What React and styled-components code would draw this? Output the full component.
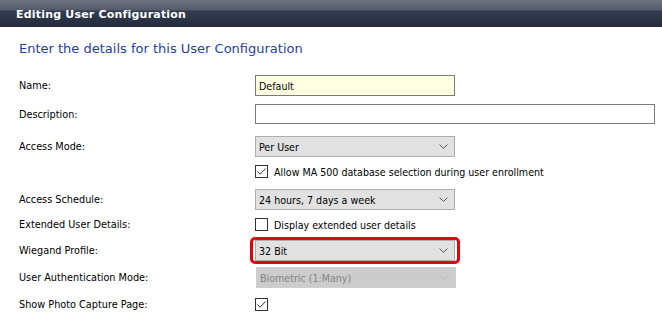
import styled, { createGlobalStyle } from 'styled-components'

const GlobalStyle = createGlobalStyle`
  html, body {
    margin: 0;
    padding: 0;
    background: #fff;
  }
`

const Chevron = ({ disabled }) => (
  <svg width="9" height="5" viewBox="0 0 9 5">
    <path d="M0.5 0.5 L4.5 4.5 L8.5 0.5" fill="none" stroke={disabled ? '#b3b3b3' : '#5a5a5a'} strokeWidth="1" />
  </svg>
)

const Tick = () => (
  <svg width="11" height="11" viewBox="0 0 11 11">
    <path d="M1.5 5.5 L4.2 8.2 L9.5 2.5" fill="none" stroke="#333" strokeWidth="1" />
  </svg>
)

const rows = [
  { label: 'Name:', gap: 0, h: 21, kind: 'input', value: 'Default', width: 200, yellow: true },
  { label: 'Description:', gap: 8, h: 20, kind: 'input', value: '', width: 400 },
  { label: 'Access Mode:', gap: 12, h: 21, kind: 'select', value: 'Per User' },
  { label: '', gap: 8, h: 13, kind: 'check', checked: true, text: 'Allow MA 500 database selection during user enrollment' },
  { label: 'Access Schedule:', gap: 11, h: 20, kind: 'select', value: '24 hours, 7 days a week' },
  { label: 'Extended User Details:', gap: 9, h: 12, kind: 'check', checked: false, text: 'Display extended user details' },
  { label: 'Wiegand Profile:', gap: 10, h: 21, kind: 'select', value: '32 Bit', highlight: true },
  { label: 'User Authentication Mode:', gap: 6, h: 21, kind: 'select', value: 'Biometric (1:Many)', disabled: true },
  { label: 'Show Photo Capture Page:', gap: 10, h: 12, kind: 'check', checked: true, text: '' },
]

const Field = ({ row }) => {
  if (row.kind === 'input') {
    return <TextBox $w={row.width} $yellow={row.yellow}>{row.value}</TextBox>
  }
  if (row.kind === 'check') {
    return (
      <CheckLine>
        <CheckBox>{row.checked && <Tick />}</CheckBox>
        {row.text && <CheckText>{row.text}</CheckText>}
      </CheckLine>
    )
  }
  return (
    <SelectBox $disabled={row.disabled} $highlight={row.highlight}>
      <span>{row.value}</span>
      <Chevron disabled={row.disabled} />
    </SelectBox>
  )
}

const App = () => {
  return (
    <Page>
      <GlobalStyle />
      <Header>Editing User Configuration</Header>
      <Intro>Enter the details for this User Configuration</Intro>
      <Form>
        {rows.map((row, i) => (
          <Row key={i} $gap={row.gap} $h={row.h}>
            <Label>{row.label}</Label>
            <Field row={row} />
          </Row>
        ))}
      </Form>
    </Page>
  )
}

const uiFont = `'DejaVu Sans Condensed', 'Liberation Sans', Arial, sans-serif`

const Page = styled.div`
  width: 662px;
  height: 322px;
  background: #fff;
  overflow: hidden;
  font-family: 'DejaVu Sans', Verdana, sans-serif;
`

const Header = styled.div`
  height: 27px;
  display: flex;
  align-items: center;
  padding-left: 16px;
  padding-top: 1px;
  box-sizing: border-box;
  color: #fff;
  font-weight: bold;
  font-size: 11px;
  letter-spacing: 0.2px;
  background: linear-gradient(
    to bottom,
    #6d7381 0px,
    #535b6a 10px,
    #343e51 11px,
    #222b3a 27px
  );
`

const Intro = styled.div`
  margin: 14px 0 0 19px;
  height: 16px;
  line-height: 16px;
  color: #1c3ea8;
  font-size: 13px;
`

const Form = styled.div`
  padding: 18px 0 0 19px;
`

const Row = styled.div`
  display: grid;
  grid-template-columns: 236px 1fr;
  align-items: center;
  height: ${(p) => p.$h}px;
  margin-top: ${(p) => p.$gap}px;
`

const Label = styled.div`
  font-family: ${uiFont};
  font-size: 10.8px;
  color: #000;
  white-space: nowrap;
`

const TextBox = styled.div`
  box-sizing: border-box;
  width: ${(p) => p.$w}px;
  height: 100%;
  border: 1px solid #7a7a7a;
  background: ${(p) => (p.$yellow ? '#ffffe1' : '#fff')};
  font-family: ${uiFont};
  font-size: 10.6px;
  padding: 0 3px;
  display: flex;
  align-items: center;
`

const SelectBox = styled.div`
  position: relative;
  box-sizing: border-box;
  width: 200px;
  height: 21px;
  margin-left: ${(p) => (p.$disabled ? 1 : 0)}px;
  border: 1px solid ${(p) => (p.$disabled ? '#cfcfcf' : '#adadad')};
  background: ${(p) => (p.$disabled ? '#cccccc' : '#e1e1e1')};
  color: ${(p) => (p.$disabled ? '#838383' : '#000')};
  font-family: ${uiFont};
  font-size: 10.6px;
  padding: 0 6px 0 3px;
  display: flex;
  align-items: center;
  justify-content: space-between;

  &::after {
    content: '';
    display: ${(p) => (p.$highlight ? 'block' : 'none')};
    position: absolute;
    top: -4px;
    bottom: -4px;
    left: -6px;
    right: -6px;
    border: 3px solid #e8000b;
    border-radius: 5px;
  }
`

const CheckLine = styled.div`
  display: flex;
  align-items: center;
  gap: 6px;
`

const CheckBox = styled.div`
  box-sizing: border-box;
  width: 13px;
  height: 13px;
  border: 1px solid #333;
  background: #fff;
  display: flex;
  align-items: center;
  justify-content: center;
`

const CheckText = styled.span`
  font-family: ${uiFont};
  font-size: 10.6px;
`

export default App
